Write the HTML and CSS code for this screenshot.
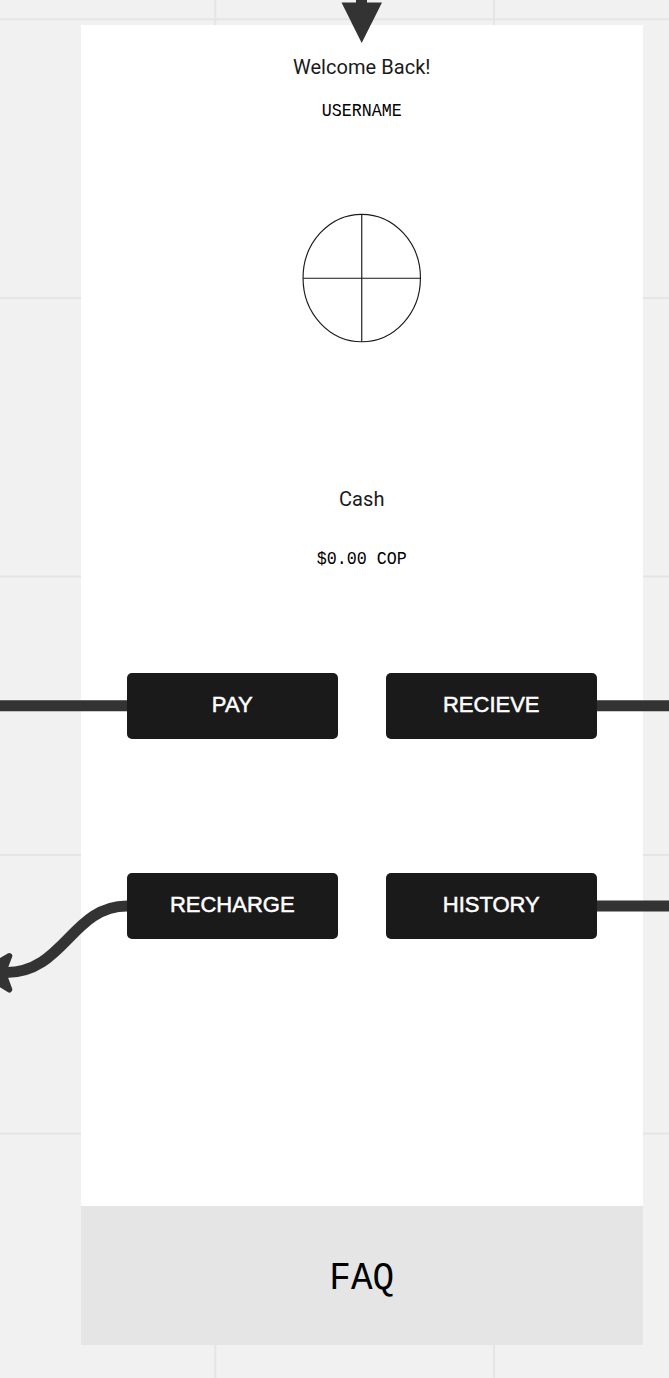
FILE: index.html
```html
<!DOCTYPE html>
<html lang="en">
<head>
<meta charset="utf-8">
<title>Wallet home wireframe</title>
<link rel="stylesheet" href="styles.css">
</head>
<body>
<div class="board">
  <svg class="grid" width="669" height="1378" viewBox="0 0 669 1378" aria-hidden="true">
    <path d="M215.2 0V1378M493.9 0V1378M0 19.2H669M0 298H669M0 576.4H669M0 855H669M0 1133.5H669"/>
  </svg>
  <main class="screen">
    <h1 class="title">Welcome Back!</h1>
    <p class="mono">USERNAME</p>
    <svg class="avatar" width="120" height="130" viewBox="0 0 120 130" aria-hidden="true">
      <ellipse cx="59.75" cy="65" rx="58.7" ry="63.7"/>
      <path d="M59.75 1.3V128.7M1.05 65.2H118.45"/>
    </svg>
    <h2 class="title">Cash</h2>
    <p class="mono amount">$0.00 COP</p>
    <nav class="actions">
      <button class="action">PAY</button>
      <button class="action">RECIEVE</button>
      <button class="action">RECHARGE</button>
      <button class="action">HISTORY</button>
    </nav>
    <footer class="faq"><span class="faq-label">FAQ</span></footer>
  </main>
  <svg class="links" width="669" height="1378" viewBox="0 0 669 1378" aria-hidden="true">
    <path class="wire" d="M361.5 0V4M0 705.7H127M597 705.7H669M597 906H669M127 906C72 906 64 972.5 6 972.5"/>
    <path class="head" d="M341.5 2.5H382L361.7 43Z"/>
    <path class="tip" d="M9.3 956L-18 972.5L9.3 989.5L3 972.5Z"/>
  </svg>
</div>
</body>
</html>
```
FILE: styles.css
```css
* { box-sizing: border-box; }

body { margin: 0; }

.board {
  position: relative;
  width: 669px;
  height: 1378px;
  padding: 25px 26.5px 33px 81px;
  overflow: hidden;
  background: #f1f1f1;
}

.grid,
.links {
  position: absolute;
  top: 0;
  left: 0;
  pointer-events: none;
}

.grid {
  fill: none;
  stroke: #e5e5e5;
  stroke-width: 2;
}

.screen {
  position: relative;
  display: flex;
  flex-direction: column;
  align-items: center;
  height: 1320px;
  padding-top: 27px;
  background: #fff;
}

.title {
  margin: 0;
  font: 400 20px/30px Roboto, sans-serif;
  letter-spacing: 0.05px;
  color: #1a1a1a;
}

.mono {
  margin: 15px 0 0;
  font: 400 16.67px/30px "Liberation Mono", monospace;
  color: #000;
  transform: scaleY(1.06);
}

.avatar {
  margin: 86px 0 141px;
  fill: none;
  stroke: #1a1a1a;
  stroke-width: 1.15;
}

.amount { margin-top: 31px; }

.actions {
  display: grid;
  grid-template-columns: 211px 211px;
  gap: 134px 48px;
  margin-top: 98px;
}

.action {
  height: 66px;
  padding: 0 0 2px;
  border: 0;
  border-radius: 5px;
  background: #1a1a1a;
  color: #fff;
  font: 400 22px/30px "Liberation Sans", Arial, sans-serif;
  -webkit-text-stroke: 0.5px #fff;
}

.faq {
  display: flex;
  align-items: center;
  justify-content: center;
  align-self: stretch;
  height: 139.5px;
  margin-top: auto;
  padding-top: 7px;
  background: #e5e5e5;
  color: #000;
  font: 400 36px/40px "Liberation Mono", monospace;
}

.faq-label { transform: scaleY(1.06); }

.wire {
  fill: none;
  stroke: #333;
  stroke-width: 11;
}

.head { fill: #333; }

.tip {
  fill: #333;
  stroke: #333;
  stroke-width: 6;
  stroke-linejoin: round;
}
```
